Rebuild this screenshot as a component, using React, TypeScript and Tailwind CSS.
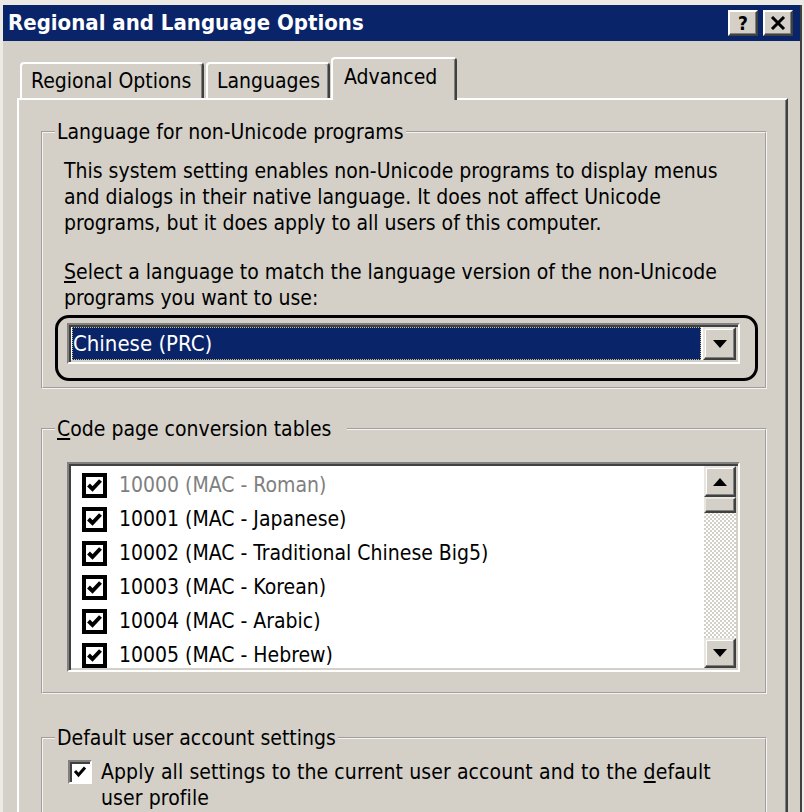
import React from "react"

const FONT = "font-['DejaVu_Sans_Condensed','DejaVu_Sans',Tahoma,sans-serif]"

const codePages = [
  { id: "10000", label: "10000 (MAC - Roman)", disabled: true },
  { id: "10001", label: "10001 (MAC - Japanese)" },
  { id: "10002", label: "10002 (MAC - Traditional Chinese Big5)" },
  { id: "10003", label: "10003 (MAC - Korean)" },
  { id: "10004", label: "10004 (MAC - Arabic)" },
  { id: "10005", label: "10005 (MAC - Hebrew)" },
]

function CaptionButton({ children }: { children: React.ReactNode }) {
  return (
    <div className="flex h-[26px] w-[30px] items-center justify-center border-2 border-t-white border-l-white border-r-[#404040] border-b-[#404040] bg-[#d4d0c8] shadow-[inset_-1px_-1px_0_#808080]">
      {children}
    </div>
  )
}

function ScrollButton({ up, className }: { up?: boolean; className: string }) {
  return (
    <div
      className={`flex w-full items-center justify-center border-2 border-t-[#e8e6e0] border-l-[#e8e6e0] border-r-[#404040] border-b-[#404040] bg-[#d4d0c8] shadow-[inset_-1px_-1px_0_#808080,inset_1px_1px_0_#fff] ${className}`}
    >
      <svg width="14" height="8" viewBox="0 0 14 8">
        {up ? <path d="M0 8 L7 0 L14 8 Z" fill="#000" /> : <path d="M0 0 L14 0 L7 8 Z" fill="#000" />}
      </svg>
    </div>
  )
}

function ListCheck() {
  return (
    <svg width="25" height="25" viewBox="0 0 25 25" className="shrink-0">
      <rect x="2" y="2" width="21" height="21" fill="#fff" stroke="#000" strokeWidth="4" />
      <path d="M6.5 12 L10.5 16 L18.5 7.5" fill="none" stroke="#000" strokeWidth="4" />
    </svg>
  )
}

export default function App() {
  return (
    <div className={`h-[812px] w-[804px] overflow-hidden bg-[#eceae4] pt-[5px] pl-[3px] pr-[2px] ${FONT}`}>
      <div className="flex h-full flex-col border-r-2 border-r-[#404040] bg-[#d4d0c8]">
        {/* title bar */}
        <div className="flex h-[36px] shrink-0 items-center justify-between bg-[#0a246a] pl-[5px] pr-[7px]">
          <span className="text-[22px] font-bold leading-none text-white">Regional and Language Options</span>
          <div className="flex gap-[5px]">
            <CaptionButton>
              <span className="text-[19px] font-bold leading-none text-black">?</span>
            </CaptionButton>
            <CaptionButton>
              <svg width="16" height="14" viewBox="0 0 16 14">
                <path d="M2 1 L14 13 M14 1 L2 13" stroke="#000" strokeWidth="3" />
              </svg>
            </CaptionButton>
          </div>
        </div>

        {/* tabs */}
        <div className="mt-[16px] flex h-[41px] shrink-0 items-end pl-[17px] text-[21px] leading-none text-black">
          <div className="flex h-[36px] w-[184px] items-center rounded-t-[4px] border-t-2 border-l-2 border-r-2 border-t-white border-l-white border-r-[#404040] pl-[9px] shadow-[inset_-1px_0_0_#808080]">
            Regional Options
          </div>
          <div className="ml-[2px] flex h-[36px] w-[124px] items-center rounded-t-[4px] border-t-2 border-l-2 border-r-2 border-t-white border-l-white border-r-[#404040] pl-[9px] shadow-[inset_-1px_0_0_#808080]">
            Languages
          </div>
          <div className="relative z-10 -mb-[2px] ml-[1px] flex h-[43px] w-[126px] items-start rounded-t-[4px] border-t-2 border-l-2 border-r-2 border-t-white border-l-white border-r-[#404040] bg-[#d4d0c8] pt-[8px] pl-[11px] shadow-[inset_-1px_0_0_#808080]">
            Advanced
          </div>
        </div>

        {/* tab panel */}
        <div className="ml-[14px] mr-[12px] flex-1 border-t-2 border-l-2 border-r-2 border-t-white border-l-white border-r-[#404040] pt-[19px] pl-[22px] pr-[19px] text-[21px] leading-[26px] text-black shadow-[inset_-1px_0_0_#808080]">
          <fieldset className="border-2 border-[#f4f3ef] pb-[6px] [border-style:groove]">
            <legend className="ml-[12px] px-[2px]">Language for non-Unicode programs</legend>
            <p className="mt-[13px] ml-[21px]">
              This system setting enables non-Unicode programs to display menus
              <br />
              and dialogs in their native language. It does not affect Unicode
              <br />
              programs, but it does apply to all users of this computer.
            </p>
            <p className="mt-[23px] ml-[21px]">
              <span className="underline underline-offset-2">S</span>elect a language to match the language version of the non-Unicode
              <br />
              programs you want to use:
            </p>
            <div className="mt-[4px] ml-[12px] w-[703px] rounded-[14px] border-[3px] border-black pt-[5px] pb-[14px] pl-[9px]">
              <div className="flex h-[41px] w-[673px] items-stretch border-2 border-t-[#808080] border-l-[#808080] border-r-white border-b-white bg-white shadow-[inset_2px_2px_0_#404040,inset_-2px_-2px_0_#d4d0c8]">
                <div className="my-[2px] ml-[3px] flex flex-1 items-center border border-dotted border-[#c9c07a] bg-[#0a246a] text-[22px] text-white">
                  Chinese (PRC)
                </div>
                <div className="my-[2px] mr-[2px] ml-[2px] flex w-[33px] items-center justify-center border-2 border-t-[#e8e6e0] border-l-[#e8e6e0] border-r-[#404040] border-b-[#404040] bg-[#d4d0c8] shadow-[inset_-1px_-1px_0_#808080,inset_1px_1px_0_#fff]">
                  <svg width="14" height="8" viewBox="0 0 14 8">
                    <path d="M0 0 L14 0 L7 8 Z" fill="#000" />
                  </svg>
                </div>
              </div>
            </div>
          </fieldset>

          <fieldset className="mt-[27px] border-2 border-[#f4f3ef] pb-[20px] [border-style:groove]">
            <legend className="ml-[12px] pr-[16px] pl-[2px]">
              <span className="underline underline-offset-2">C</span>ode page conversion tables
            </legend>
            <div className="mt-[20px] ml-[24px] flex h-[210px] w-[673px] border-2 border-t-[#808080] border-l-[#808080] border-r-white border-b-white bg-white shadow-[inset_2px_2px_0_#404040,inset_-2px_-2px_0_#d4d0c8]">
              <ul className="flex-1 pt-[4px] pl-[13px]">
                {codePages.map((cp) => (
                  <li key={cp.id} className="flex h-[34px] items-center gap-[12px]">
                    <ListCheck />
                    <span className={cp.disabled ? "text-[#808080]" : "text-black"}>{cp.label}</span>
                  </li>
                ))}
              </ul>
              <div className="my-[2px] mr-[2px] flex w-[32px] flex-col bg-[repeating-conic-gradient(#d4d0c8_0_25%,#ffffff_0_50%)] bg-[length:4px_4px]">
                <ScrollButton up className="h-[31px]" />
                <div className="h-[16px] border-2 border-t-[#e8e6e0] border-l-[#e8e6e0] border-r-[#404040] border-b-[#404040] bg-[#d4d0c8] shadow-[inset_-1px_-1px_0_#808080]" />
                <div className="flex-1" />
                <ScrollButton className="h-[30px]" />
              </div>
            </div>
          </fieldset>

          <fieldset className="mt-[31px] border-2 border-[#f4f3ef] pb-[20px] [border-style:groove]">
            <legend className="ml-[12px] px-[2px]">Default user account settings</legend>
            <div className="mt-[8px] ml-[25px] flex items-start gap-[9px]">
              <div className="mt-[1px] flex h-[24px] w-[24px] shrink-0 items-center justify-center border-2 border-t-[#808080] border-l-[#808080] border-r-white border-b-white bg-white shadow-[inset_2px_2px_0_#404040]">
                <svg width="14" height="14" viewBox="0 0 14 14">
                  <path d="M2 6 L5.5 10 L12 2.5" fill="none" stroke="#000" strokeWidth="3" />
                </svg>
              </div>
              <p className="tracking-[0.1px]">
                Apply all settings to the current user account and to the{" "}
                <span className="underline underline-offset-2">d</span>efault
                <br />
                user profile
              </p>
            </div>
          </fieldset>
        </div>
      </div>
    </div>
  )
}
